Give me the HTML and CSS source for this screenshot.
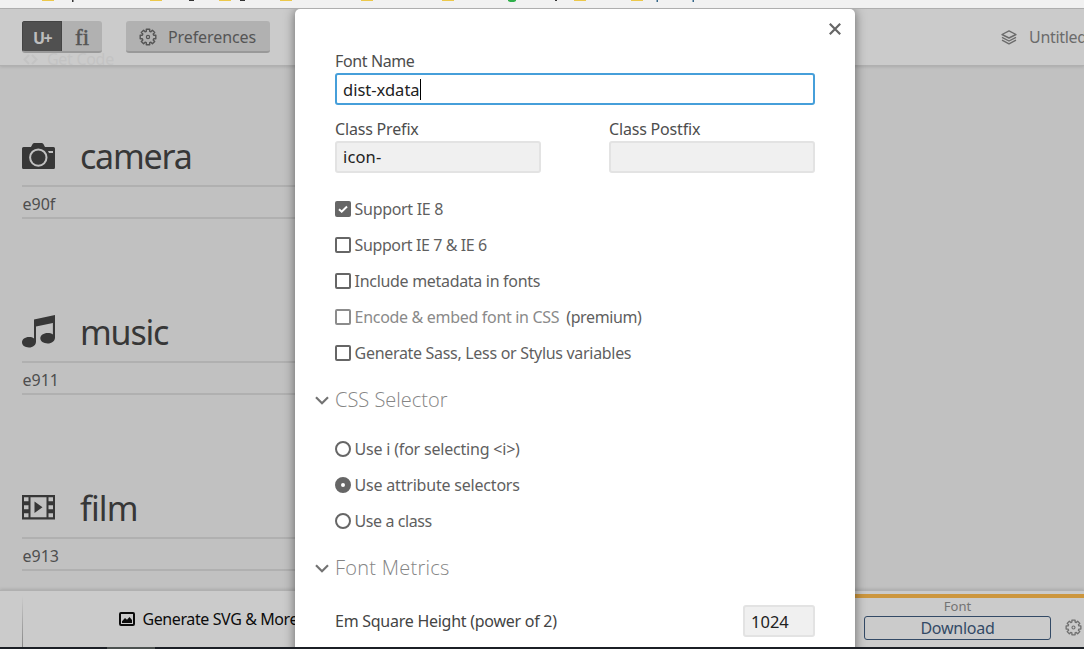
FILE: index.html
```
<!DOCTYPE html>
<html lang="en">
<head>
<meta charset="utf-8">
<title>Font settings</title>
<link rel="stylesheet" href="styles.css">
</head>
<body>
<svg class="defs" width="0" height="0" aria-hidden="true">
  <symbol id="gear" viewBox="0 0 18 18"><path d="M7.3 1.2h3.4v2.1l1.2.5 1.5-1.5 2.3 2.3-1.5 1.5.5 1.2h2.1v3.4h-2.1l-.5 1.2 1.5 1.5-2.3 2.3-1.5-1.5-1.2.5v2.1H7.3v-2.1l-1.2-.5-1.5 1.5-2.3-2.3 1.5-1.5-.5-1.2H1.2V7.3h2.1l.5-1.2-1.5-1.5 2.3-2.3 1.5 1.5 1.2-.5z" fill="none" stroke="currentColor" stroke-width="1.4" stroke-linejoin="round"/><circle cx="9" cy="9" r="1.6" fill="none" stroke="currentColor" stroke-width="1.2"/></symbol>
  <symbol id="chevron" viewBox="0 0 14 9"><path d="M1 1.2l6 6 6-6" fill="none" stroke="currentColor" stroke-width="2.2"/></symbol>
</svg>
<div class="app">
  <div class="bookmarks">
    <svg width="1084" height="8" viewBox="0 0 1084 8">
      <path fill="#ecc84a" d="M42 0h12v1H42zM150 0h12v1h-12zM219 0h12v1h-12zM280 0h12v1h-12zM361 0h12v1h-12zM442 0h12v1h-12zM574 0h12v1h-12zM631 0h12v1h-12z"/>
      <path fill="#2fb04a" d="M508 0h8v1l-2 1h-4l-2-1z"/>
      <path fill="#333" d="M72 0h1.5v2H72zM189 0h5v1h-5zM240 0h5v1h-5zM555 0h2v1h-2z"/>
      <path fill="#37688a" d="M656.500 0h1.500v2h-1.500zM692.500 0h1.500v2h-1.500z"/>
    </svg>
  </div>
  <header class="toolbar">
    <div class="toggle"><span class="on">U+</span><span class="liga">fi</span></div>
    <div class="btn prefs"><svg width="18" height="18"><use href="#gear"/></svg><span>Preferences</span></div>
    <div class="project">
      <svg width="16" height="15" viewBox="0 0 16 15" fill="none" stroke="currentColor" stroke-width="1.4" stroke-linejoin="round"><path d="M8 .9L15 4.500 8 8 1 4.500zM1 7.400L8 11l7-3.600M1 10.200l7 3.600 7-3.600"/></svg>
      <span>Untitled</span>
    </div>
    <div class="ghost"><svg width="15" height="11" viewBox="0 0 15 11" fill="none" stroke="currentColor" stroke-width="2"><path d="M6 1L1.500 5.500 6 10M9 1l4.500 4.500L9 10"/></svg><span>Get Code</span></div>
  </header>
  <main class="glyphs">
    <section class="glyph">
      <div class="preview"><svg width="33" height="27" viewBox="0 0 33 27"><path fill="currentColor" d="M1.500 4H9l1.600-3Q11.200 0 12.500 0h7q1.300 0 1.900 1L23 4h8.500Q33 4 33 5.500v19q0 1.500-1.500 1.500h-30Q0 26 0 24.500v-19Q0 4 1.500 4z"/><circle cx="16.300" cy="14.600" r="8.200" fill="none" stroke="#c1c1c1" stroke-width="2"/><path fill="#c1c1c1" d="M26 8h5v2h-4z"/></svg><span>camera</span></div>
      <div class="code">e90f</div>
    </section>
    <section class="glyph">
      <div class="preview"><svg class="music" width="33" height="33" viewBox="0 0 33 33"><path fill="currentColor" d="M12 4.500L33 0v22.500c0 3.500-3.200 6-7.300 6-4.300 0-7.400-2.300-7.400-5.200s3.200-5.200 7.400-5.200c2 0 3.800.5 5.200 1.400V8L14 11.500v15c0 3.500-3 6-7 6-4.300 0-7-2.300-7-5.200s3-5.200 7-5.200c2 0 3.700.5 5 1.400z"/></svg><span>music</span></div>
      <div class="code">e911</div>
    </section>
    <section class="glyph">
      <div class="preview"><svg class="film" width="33" height="25" viewBox="0 0 33 25"><path fill="currentColor" fill-rule="evenodd" d="M0 0h33v24.500H0zM8.500 2.200v20h16v-20zM2 2.200v4h4.500v-4zM2 10.200v4h4.500v-4zM2 18.200v4h4.500v-4zM26.500 2.200v4H31v-4zM26.500 10.200v4H31v-4zM26.500 18.200v4H31v-4zM12.500 6.500l8 5.700-8 5.800z"/></svg><span class="film-name">film</span></div>
      <div class="code">e913</div>
    </section>
  </main>
  <footer class="actions">
    <div class="generate">
      <svg width="16" height="14" viewBox="0 0 16 14"><rect x="1" y="1" width="14" height="12" rx="1" fill="none" stroke="#0c0c0c" stroke-width="2"/><path fill="#0c0c0c" d="M3 11V9.300L6 6l2 1.800L10.500 5 13 8v3z"/></svg>
      <span>Generate SVG &amp; More</span>
    </div>
    <div class="fontpane">
      <div class="dl"><span class="tab">Font</span><div class="download"><span>Download</span></div></div>
      <svg class="cog" width="17" height="17"><use href="#gear"/></svg>
    </div>
  </footer>
  <div class="taskbar"><div class="task"></div></div>

  <div class="modalclip">
  <form class="modal">
    <svg class="close" width="12" height="12" viewBox="0 0 12 12"><path d="M.8.8l10.400 10.400M11.200.8L.8 11.200" fill="none" stroke="#666" stroke-width="2.200"/></svg>
    <div class="field name"><label><span>Font Name</span></label><div class="input focus"><span>dist-xdata</span><i class="caret"></i></div></div>
    <div class="pair">
      <div class="field"><label><span>Class Prefix</span></label><div class="input"><span>icon-</span></div></div>
      <div class="field"><label><span>Class Postfix</span></label><div class="input"></div></div>
    </div>
    <div class="options checks">
      <div class="opt"><svg width="16" height="16" viewBox="0 0 16 16"><rect width="16" height="16" rx="2" fill="#666"/><path d="M4 8.200l2.700 2.500L12 5.500" fill="none" stroke="#fff" stroke-width="2"/></svg><span>Support IE 8</span></div>
      <div class="opt"><i class="box"></i><span class="ie">Support IE 7 &amp; IE 6</span></div>
      <div class="opt"><i class="box"></i><span>Include metadata in fonts</span></div>
      <div class="opt"><i class="box off"></i><span class="off">Encode &amp; embed font in CSS</span><span class="premium">(premium)</span></div>
      <div class="opt"><i class="box"></i><span>Generate Sass, Less or Stylus variables</span></div>
    </div>
    <h2><svg width="14" height="9"><use href="#chevron"/></svg><span>CSS Selector</span></h2>
    <div class="options radios">
      <div class="opt"><i class="dot"></i><span>Use i (for selecting &lt;i&gt;)</span></div>
      <div class="opt"><i class="dot sel"></i><span>Use attribute selectors</span></div>
      <div class="opt"><i class="dot"></i><span class="short">Use a class</span></div>
    </div>
    <h2 class="metrics"><svg width="14" height="9"><use href="#chevron"/></svg><span>Font Metrics</span></h2>
    <div class="metric"><span>Em Square Height (power of 2)</span><div class="input"><span>1024</span></div></div>
  </form>
  </div>
</div>
</body>
</html>
```
FILE: styles.css
```
* { box-sizing: border-box; }
body { margin: 0; font: 16px/24px "Noto Sans", "Open Sans", sans-serif; color: #4d4d4d; }
span { white-space: nowrap; }
svg { flex: none; display: block; }
.defs { position: absolute; }
.app { position: relative; width: 1084px; height: 649px; overflow: hidden; background: #c1c1c1; display: flex; flex-direction: column; }
.bookmarks { height: 9px; flex: none; background: #f1f1f1; border-bottom: 1px solid #b2b2b2; }
.toolbar { position: relative; height: 57px; flex: none; background: #cbcbcb; border-bottom: 1px solid #b0b0b0; box-shadow: 0 1px 3px rgba(0,0,0,.12); display: flex; align-items: flex-start; padding: 12px 0 0 22px; }
.toggle { position: relative; z-index: 1; display: flex; width: 80px; height: 32px; border-radius: 3px; overflow: hidden; text-align: center; line-height: 34px; background: #b1b1b1; border-bottom: 2px solid #999; }
.toggle span { width: 40px; height: 32px; }
.toggle .on { background: #505050; color: #bdbdbd; font-weight: 700; font-size: 16px; letter-spacing: -1.6px; box-shadow: inset 0 0 0 1px #444; }
.toggle .liga { font: 23px/34px "Liberation Serif", serif; color: #555; -webkit-text-stroke: .5px #555; }
.btn { margin-left: 24px; width: 144px; height: 32px; border-radius: 3px; background: #b1b1b1; border-bottom: 2px solid #999; display: flex; align-items: center; gap: 11px; padding: 2px 0 0 13px; color: #555; letter-spacing: -.1px; }
.project { margin-left: auto; width: 83px; height: 32px; display: flex; align-items: center; gap: 12px; color: #6b6b6b; letter-spacing: -.3px; }
.ghost { position: absolute; left: 23px; top: 42px; height: 14px; overflow: hidden; display: flex; align-items: flex-start; gap: 9px; color: #c3c3c3; line-height: 17px; letter-spacing: -.3px; }
.ghost svg { margin-top: 3px; }
.glyphs { flex: 1; padding: 62px 0 0 22px; display: flex; flex-direction: column; gap: 85px; }
.glyph { width: 300px; height: 91px; flex: none; }
.preview { height: 57px; display: flex; align-items: center; gap: 25px; font: 34px/57px "Noto Sans", sans-serif; letter-spacing: -1.2px; color: #373737; }
.film-name { letter-spacing: -.8px; }
.music { margin-top: -2px; }
.film { margin-top: -3px; }
.code { height: 34px; line-height: 34px; border-top: 2px solid #b0b0b0; border-bottom: 2px solid #b0b0b0; color: #4e4e4e; padding-left: .5px; }
.actions { height: 57px; flex: none; background: #cbcbcb; border-top: 1px solid #b0b0b0; box-shadow: 0 -1px 3px rgba(0,0,0,.12); display: flex; justify-content: space-between; }
.generate { margin-left: 22px; flex: none; width: 300px; border-left: 1px solid; border-image: linear-gradient(transparent 10%, #858585) 1; display: flex; align-items: center; gap: 8px; padding-left: 95.5px; color: #0c0c0c; letter-spacing: -.4px; }
.fontpane { width: 232px; margin-top: 3px; border-top: 4px solid #cc963d; display: flex; align-items: flex-start; padding-left: 12px; }
.dl { width: 187px; display: flex; flex-direction: column; align-items: center; }
.tab { font-size: 13px; line-height: 17px; height: 18px; color: #737373; }
.download { width: 187px; height: 24px; border: 1px solid #334a66; border-radius: 3px; text-align: center; line-height: 22px; color: #334a66; letter-spacing: -.25px; }
.cog { margin: 21px 0 0 14px; color: #707070; }
.taskbar { height: 2px; flex: none; background: #1b1f25; padding-left: 107px; }
.task { width: 48px; height: 2px; background: #4c5150; }
.modalclip { position: absolute; left: 275px; top: 9px; width: 600px; height: 638px; padding: 0 20px; overflow: hidden; }
.modal { position: relative; height: 660px; background: #fff; border-radius: 5px; box-shadow: 0 1px 11px rgba(0,0,0,.5); padding: 40px 40px 0; }
.close { position: absolute; right: 14px; top: 14px; }
.field label { display: block; height: 24px; letter-spacing: -.18px; }
.name label { letter-spacing: -.38px; }
.input { height: 32px; border: 2px solid #e3e3e3; border-radius: 3px; background: #f0f0f0; color: #222; padding: 1px 0 0 6px; display: flex; align-items: center; font-size: 16.5px; line-height: 27px; }
.focus { background: #fff; border-color: #469fda; }
.caret { width: 1px; height: 21px; background: #000; }
.pair { display: flex; justify-content: space-between; margin-top: 12px; }
.pair .field { width: 206px; }
.pair .input { padding-top: 0; line-height: 26px; letter-spacing: .15px; }
.options { color: #5f5f5f; }
.checks { margin-top: 18px; letter-spacing: -.31px; }
.ie { letter-spacing: -.4px; }
.radios { margin-top: 13px; letter-spacing: -.2px; }
.short { letter-spacing: -.42px; }
.opt { height: 36px; display: flex; align-items: center; gap: 3.6px; }
.box, .dot { width: 16px; height: 16px; flex: none; border: 2px solid #666; border-radius: 2px; }
.dot { border-radius: 50%; }
.sel { border-width: 6px; }
.box.off { border-color: #8c8c8c; }
span.off { color: #8a8a8a; }
.premium { margin-left: 3.4px; letter-spacing: -.4px; }
h2 { margin: 11px 0 0 -20px; height: 36px; display: flex; align-items: center; gap: 6px; font: 300 20px/36px "Open Sans", sans-serif; color: #858585; }
h2.metrics { letter-spacing: .25px; }
h2 svg { color: #737373; }
.metric { margin-top: 19px; display: flex; justify-content: space-between; align-items: center; color: #444; letter-spacing: -.26px; }
.metric .input { width: 72px; letter-spacing: 0; }
```
